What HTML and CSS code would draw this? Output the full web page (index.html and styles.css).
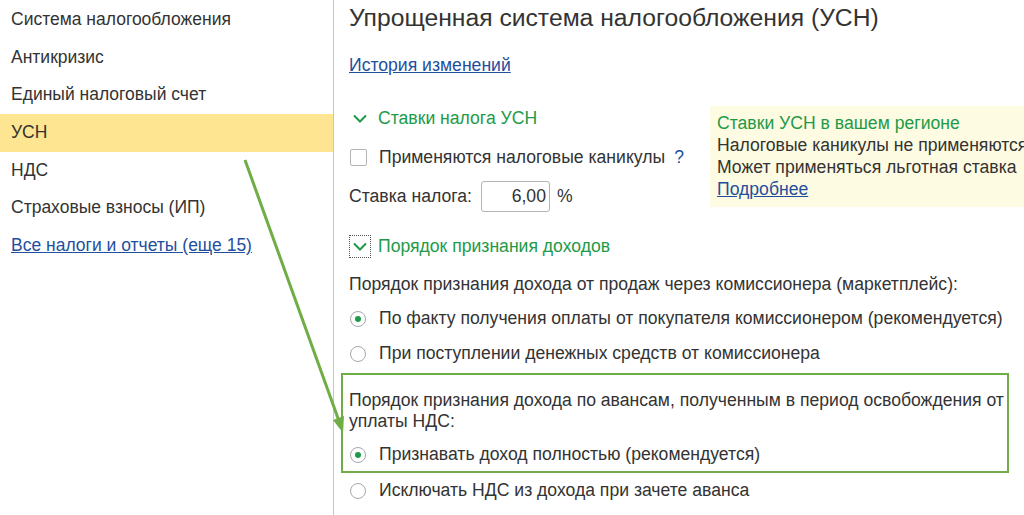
FILE: index.html
```html
<!DOCTYPE html>
<html lang="ru">
<head>
  <meta charset="UTF-8">
  <meta name="viewport" content="width=device-width, initial-scale=1.0">
  <title>УСН</title>
  <link rel="stylesheet" href="styles.css">
</head>
<body>

  <div class="sidebar">
    <div class="nav-item">Система налогообложения</div>
    <div class="nav-item">Антикризис</div>
    <div class="nav-item">Единый налоговый счет</div>
    <div class="nav-item active">УСН</div>
    <div class="nav-item">НДС</div>
    <div class="nav-item">Страховые взносы (ИП)</div>
    <div class="nav-item"><a class="link" href="#">Все налоги и отчеты (еще 15)</a></div>
  </div>

  <div class="main">
    <h1 class="title">Упрощенная система налогообложения (УСН)</h1>
    <div class="row history"><a class="link" href="#">История изменений</a></div>

    <div class="rates">
      <div class="rates-left">
        <div class="row group-head">
          <span class="chevron">
            <svg width="14" height="9" viewBox="0 0 14 9"><path d="M1 1.5 L7 7.5 L13 1.5" fill="none" stroke="#1e9a48" stroke-width="2"/></svg>
          </span>
          Ставки налога УСН
        </div>
        <div class="row">
          <span class="checkbox"></span>
          Применяются налоговые каникулы
          <span class="help">?</span>
        </div>
        <div class="row">
          Ставка налога:
          <span class="input">6,00</span>
          <span class="unit">%</span>
        </div>
      </div>
      <div class="region-info">
        <div class="info-title">Ставки УСН в вашем регионе</div>
        <div>Налоговые каникулы не применяются</div>
        <div>Может применяться льготная ставка</div>
        <div><a class="link" href="#">Подробнее</a></div>
      </div>
    </div>

    <div class="row group-head second">
      <span class="chevron focused">
        <svg width="14" height="9" viewBox="0 0 14 9"><path d="M1 1.5 L7 7.5 L13 1.5" fill="none" stroke="#1e9a48" stroke-width="2"/></svg>
      </span>
      Порядок признания доходов
    </div>

    <div class="row label">Порядок признания дохода от продаж через комиссионера (маркетплейс):</div>
    <div class="row radio-row"><span class="radio checked"></span>По факту получения оплаты от покупателя комиссионером (рекомендуется)</div>
    <div class="row radio-row"><span class="radio"></span>При поступлении денежных средств от комиссионера</div>

    <div class="highlight">
      <div class="multi">Порядок признания дохода по авансам, полученным в период освобождения от<br>уплаты НДС:</div>
      <div class="row radio-row"><span class="radio checked"></span>Признавать доход полностью (рекомендуется)</div>
    </div>
    <div class="row radio-row"><span class="radio"></span>Исключать НДС из дохода при зачете аванса</div>
  </div>

  <!-- pointer from the УСН menu item to the highlighted option -->
  <svg class="pointer" width="1024" height="515" viewBox="0 0 1024 515">
    <line x1="245" y1="160" x2="339" y2="421" stroke="#70ad47" stroke-width="3"/>
    <polygon points="343,433 333,420 344,416" fill="#70ad47"/>
  </svg>

</body>
</html>
```

FILE: styles.css
```css
body {
  margin: 0;
  font-family: "Liberation Sans", Arial, sans-serif;
  font-size: 17.6px;
  color: #333;
  background: #fff;
  display: flex;
  height: 515px;
  overflow: hidden;
}

.link {
  color: #1f4f9e;
  text-decoration: underline;
}

.sidebar {
  width: 333px;
  flex: none;
  border-right: 1px solid #c6c6c6;
  padding-top: 1px;
  font-size: 17.5px;
}

.nav-item {
  height: 37.7px;
  line-height: 37.7px;
  padding-left: 11px;
}

.nav-item.active {
  background-color: #fde591;
}

.main {
  flex: 1;
  padding-left: 15px;
  overflow: hidden;
}

.title {
  margin: 0;
  height: 36px;
  line-height: 36px;
  font-size: 24.7px;
  font-weight: normal;
  color: #333;
  white-space: nowrap;
}

.row {
  display: flex;
  align-items: center;
  height: 36px;
  white-space: nowrap;
}

.history {
  margin-top: 11px;
}

.rates {
  display: flex;
  align-items: flex-start;
  margin-top: 17px;
}

.rates-left {
  width: 361px;
  flex: none;
}

.rates-left .row + .row {
  margin-top: 3px;
}

.group-head {
  color: #1e9a48;
}

.chevron {
  display: inline-flex;
  align-items: center;
  justify-content: center;
  width: 22px;
  height: 23px;
  margin-right: 7px;
  box-sizing: border-box;
}

.chevron.focused {
  border: 1px dotted #555;
}

.group-head.second {
  margin-top: 14px;
}

.checkbox {
  width: 15px;
  height: 15px;
  border: 1px solid #b4b4b4;
  border-radius: 2px;
  margin: 0 12px 0 1px;
}

.help {
  color: #1f4f9e;
  margin-left: 9px;
}

.input {
  width: 69px;
  height: 31px;
  box-sizing: border-box;
  border: 1px solid #b4b4b4;
  border-radius: 3px;
  margin-left: 9px;
  padding-right: 3px;
  line-height: 29px;
  text-align: right;
  color: #333;
}

.unit {
  margin-left: 7px;
}

.region-info {
  flex: 1;
  margin-top: 6px;
  padding: 6px 0 7px 7px;
  background-color: #fdfbe2;
  line-height: 22px;
  white-space: nowrap;
  overflow: hidden;
}

.info-title {
  color: #1e9a48;
}

.label {
  margin-top: 3px;
  height: 34px;
}

.radio-row {
  height: 35px;
}

.radio {
  width: 16px;
  height: 16px;
  box-sizing: border-box;
  border: 1px solid #a8a8a8;
  border-radius: 50%;
  margin: 0 13px 0 1px;
  display: inline-flex;
  align-items: center;
  justify-content: center;
}

.radio.checked::after {
  content: "";
  width: 6px;
  height: 6px;
  border-radius: 50%;
  background-color: #1e9a48;
}

.highlight {
  margin: 2px 15px 0 -8px;
  border: 2px solid #70ad47;
  padding: 15px 0 0 6px;
}

.highlight .radio-row {
  height: 33px;
}

.multi {
  line-height: 21px;
  margin-bottom: 6px;
  white-space: nowrap;
}

.pointer {
  position: absolute;
  left: 0;
  top: 0;
  pointer-events: none;
}
```
